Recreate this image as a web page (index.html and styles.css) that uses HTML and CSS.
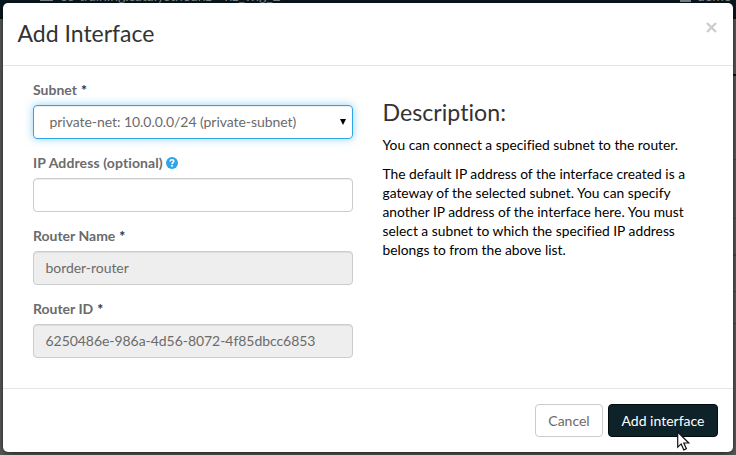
FILE: index.html
```html
<!DOCTYPE html>
<html lang="en">
<head>
<meta charset="utf-8">
<title>Add Interface</title>
<link rel="stylesheet" href="styles.css">
</head>
<body>
<div class="navbar"><i class="square"></i><span class="project">os-training.catalystneunz ▪ nz_wlg_2</span><span class="user"><i class="person"></i>demo</span></div>
<div class="page-rows"><i></i><i></i><i></i><i></i><i></i><i></i></div>
<main class="modal">
  <header class="modal-header"><h1>Add Interface</h1>
    <svg class="close" viewBox="0 0 11 11"><path d="M1 1l9 9M10 1l-9 9"/></svg>
  </header>
  <section class="modal-body">
    <form class="fields">
      <div class="group"><label>Subnet <b>*</b></label><div class="control select">private-net: 10.0.0.0/24 (private-subnet)<svg class="arrow" viewBox="0 0 6 6"><path d="M0 0h6L3 6z"/></svg></div></div>
      <div class="group"><label class="wide">IP Address (optional)<svg class="help" viewBox="0 0 12 12"><circle cx="6" cy="6" r="6"/><path d="M4.2 4.6C4.2 2 7.9 2.3 7.7 4.4C7.6 5.6 6 5.5 6 7.2M6 8.1v1.6"/></svg></label><div class="control"></div></div>
      <div class="group"><label>Router Name <b>*</b></label><div class="control disabled">border-router</div></div>
      <div class="group"><label>Router ID <b>*</b></label><div class="control disabled">6250486e-986a-4d56-8072-4f85dbcc6853</div></div>
    </form>
    <div class="description">
      <h2>Description:</h2>
      <p>You can connect a specified subnet to the router.</p>
      <p>The default IP address of the interface created is a<br>gateway of the selected subnet. You can specify<br>another IP address of the interface here. You must<br>select a subnet to which the specified IP address<br>belongs to from the above list.</p>
    </div>
  </section>
  <footer class="modal-footer"><button class="cancel">Cancel</button><button class="primary">Add interface</button></footer>
</main>
<svg class="cursor" viewBox="0 0 13 20"><path d="M.7 1v15.2l3.5-3.3 2.6 6 2.6-1.2-2.6-5.7h5z"/></svg>
</body>
</html>
```
FILE: styles.css
```css
* { box-sizing: border-box; }
body { margin: 0; width: 736px; height: 455px; padding: 3px; overflow: hidden; position: relative; background: #5d5f5e; font: 14px/20px Lato, sans-serif; font-variant-ligatures: none; color: #6b6b6b; }
.navbar { position: absolute; top: 0; left: 0; width: 736px; height: 19px; overflow: hidden; background: #08191f; color: #858889; }
.project { position: absolute; left: 60px; top: -14px; white-space: nowrap; letter-spacing: -.06px; }
.user { position: absolute; left: 697px; top: -14px; }
.square { position: absolute; left: 40px; top: 0; width: 13px; height: 1px; background: #858889; }
.person { position: absolute; left: -17px; top: 14px; width: 11px; height: 2px; background: #858889; }
.page-rows { position: absolute; left: 733px; top: 74px; width: 3px; height: 270px; }
.page-rows i { position: absolute; left: 0; width: 3px; height: 1px; background: #4b4d4c; }
.page-rows i:nth-child(1) { top: 0; height: 2px; background: #111; }
.page-rows i:nth-child(2) { top: 85px; }
.page-rows i:nth-child(3) { top: 144px; }
.page-rows i:nth-child(4) { top: 180px; height: 2px; }
.page-rows i:nth-child(5) { top: 217px; }
.page-rows i:nth-child(6) { top: 249px; }
.modal { position: relative; display: flex; flex-direction: column; width: 730px; height: 449px; background: #fff; border-radius: 5px; box-shadow: 0 4px 12px rgba(0,0,0,.5), 0 0 2px rgba(0,0,0,.5); }
.modal-header { display: flex; justify-content: space-between; height: 63px; padding: 15px 16px 0 14.5px; border-bottom: 1px solid #e5e5e5; }
h1, h2 { margin: 0; font-weight: 400; font-size: 23px; line-height: 31px; color: #333; }
h2 { margin: 0 0 7px -.5px; font-size: 23.2px; }
.close { width: 11px; height: 11px; margin-top: 4px; fill: none; stroke: #ccc; stroke-width: 2.3; }
.modal-body { display: flex; gap: 30px; height: 322px; padding: 14px 30px 0; }
.fields { width: 320px; }
.group { height: 73px; }
label { display: flex; align-items: center; height: 20px; margin-bottom: 5px; font-weight: 700; }
label b { margin-left: 4px; color: #333; }
.wide { letter-spacing: .11px; }
.help { width: 12px; height: 12px; margin-left: 3px; fill: #2fa4e7; }
.help path { fill: none; stroke: #fff; stroke-width: 1.6; }
.control { display: flex; align-items: center; height: 34px; padding: 0 11.5px; border: 1px solid #ccc; border-radius: 4px; box-shadow: inset 0 1px 1px rgba(0,0,0,.075); letter-spacing: -.05px; }
.disabled { background: #eee; }
.select { justify-content: space-between; padding: 0 6px 0 15.5px; border-color: #2fa4e7; box-shadow: inset 0 1px 1px rgba(0,0,0,.075), 0 0 8px rgba(47,164,231,.5); }
.arrow { width: 6px; height: 6px; fill: #000; }
.description { padding-top: 17px; color: #000; font-size: 13.8px; line-height: 19px; }
p { margin: 0 0 10px -.5px; white-space: nowrap; }
.modal-footer { display: flex; justify-content: flex-end; gap: 5px; height: 64px; padding: 15px; border-top: 1px solid #e5e5e5; }
button { height: 33px; padding: 0; border: 1px solid #ccc; border-radius: 4px; background: #fff; color: #6b6b6b; font: inherit; }
.cancel { width: 68px; }
.primary { width: 110px; background: #0e2229; border-color: #040b0d; color: #fff; }
.cursor { position: absolute; left: 677px; top: 431px; width: 13px; height: 20px; fill: #fff; stroke: #111; stroke-width: 1.2; }
```
